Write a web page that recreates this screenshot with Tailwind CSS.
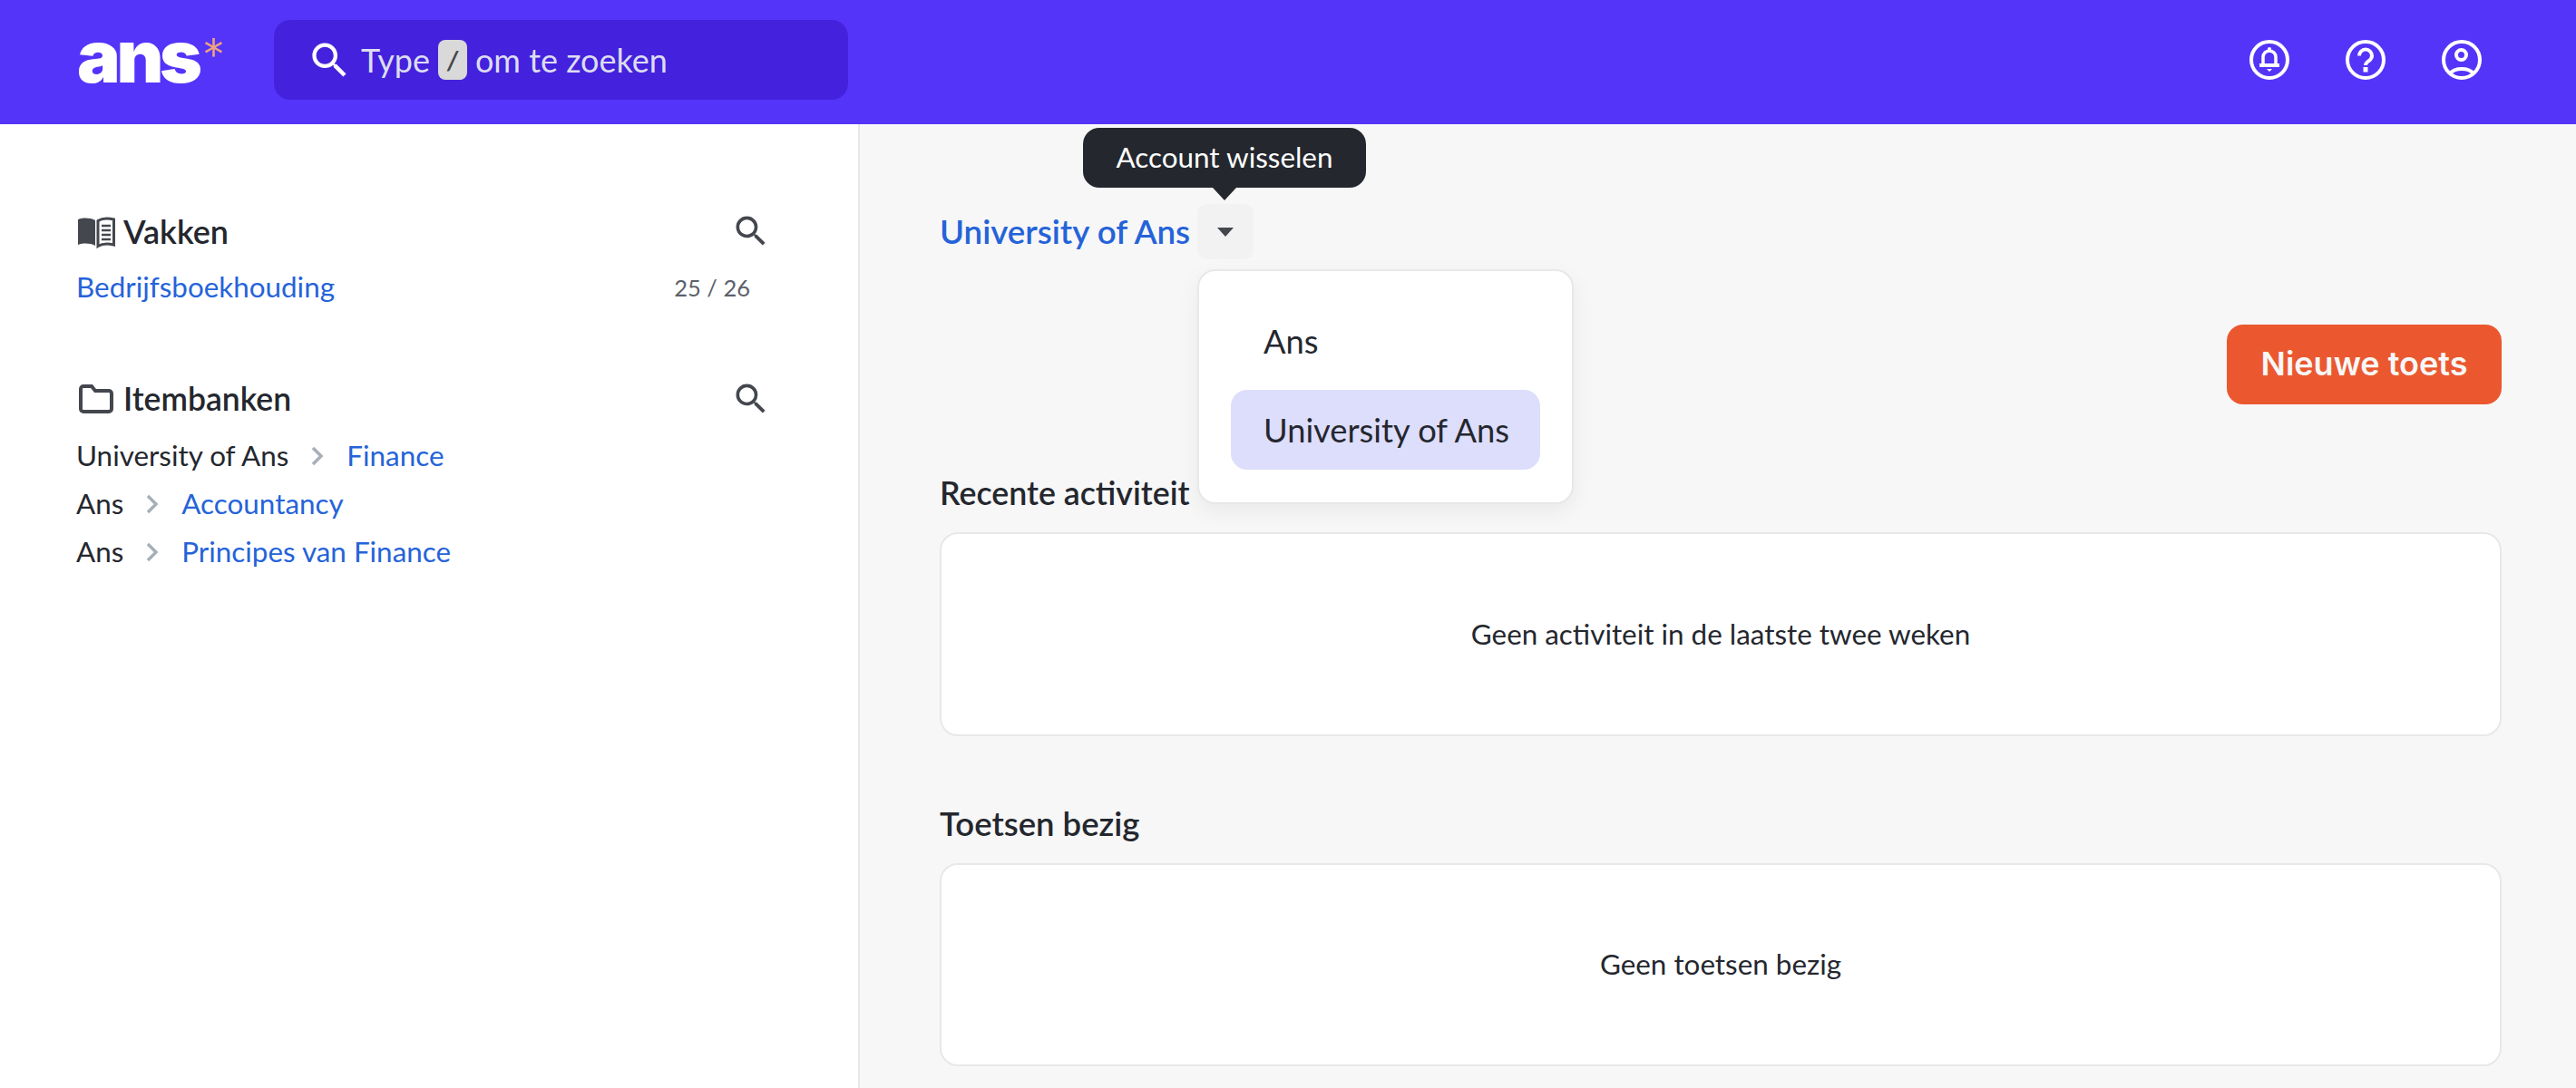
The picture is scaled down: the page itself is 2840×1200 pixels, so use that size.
<!DOCTYPE html>
<html lang="nl">
<head>
<meta charset="UTF-8">
<title>Ans</title>
<script src="https://cdn.jsdelivr.net/npm/@tailwindcss/browser@4"></script>
</head>
<body class="h-[1200px] overflow-hidden bg-white font-['Lato',sans-serif] text-[31.4px] text-[#24272e]">
  <!-- header -->
  <header class="flex h-[137px] items-start bg-[#5534fa] pl-[87px] pr-[104px] pt-[22px]">
    <a class="relative block h-[88px] w-[215px] shrink-0">
      <span class="absolute left-[-2px] top-[-4px] font-['Inter',sans-serif] text-[80px] leading-[88px] font-black tracking-[-4.3px] text-white">ans</span>
      <span class="absolute left-[136px] top-[11px] font-['Inter',sans-serif] text-[50px] leading-[56px] font-light text-[#efa37f]">*</span>
    </a>
    <div class="flex h-[88px] w-[633px] items-center rounded-[18px] bg-[#4422dd] pl-[36px] text-[36px] text-[#dcdcf2]">
      <svg class="h-[51px] w-[51px] shrink-0" viewBox="0 0 24 24" fill="#fff"><path d="M15.5 14h-.79l-.28-.27A6.471 6.471 0 0 0 16 9.5 6.5 6.5 0 1 0 9.5 16c1.61 0 3.09-.59 4.23-1.57l.27.28v.79l5 4.99L20.49 19l-4.99-5zm-6 0C7.01 14 5 11.99 5 9.5S7.01 5 9.5 5 14 7.01 14 9.5 11.99 14 9.5 14z"/></svg>
      <span class="ml-[9px]">Type</span>
      <span class="mx-[9px] flex h-[44px] w-[32px] items-center justify-center rounded-[8px] bg-[#d9d9d9] text-[28px] font-bold italic text-[#44474e]">/</span>
      <span>om te zoeken</span>
    </div>
    <div class="ml-auto flex h-[88px] items-center gap-[62px]">
      <svg class="h-[44px] w-[44px]" viewBox="0 0 44 44" fill="none" stroke="#fff" stroke-width="4"><circle cx="22" cy="22" r="20"/><path d="M15 27v-8a7 7 0 0 1 14 0v8" stroke-width="3.500"/><path d="M11 28h22" stroke-width="4"/><circle cx="22" cy="10" r="2" fill="#fff" stroke="none"/><path d="M19 32h6l-3 3z" fill="#fff" stroke="none"/></svg>
      <svg class="h-[44px] w-[44px]" viewBox="0 0 44 44" fill="none" stroke="#fff" stroke-width="4"><circle cx="22" cy="22" r="20"/><path d="M15 17.500a7 7 0 0 1 14 0c0 3.500-2 4.500-4 6s-3 2.500-3 4.500"/><path d="M19.500 30h5v5.500h-5z" fill="#fff" stroke="none"/></svg>
      <svg class="h-[44px] w-[44px]" viewBox="0 0 44 44" fill="none" stroke="#fff" stroke-width="4"><circle cx="22" cy="22" r="20"/><circle cx="21.500" cy="16.500" r="5.500"/><path d="M9 37c3-3.500 8-5 13-5s10 1.500 13 5"/></svg>
    </div>
  </header>

  <div class="flex h-[1063px]">
    <!-- sidebar -->
    <aside class="w-[948px] shrink-0 border-r-2 border-[#e8e8e8] pl-[84px] pr-[96px] pt-[99px]">
      <div class="flex h-[38px] items-center">
        <svg class="ml-[1px] h-[40px] w-[42px] shrink-0" viewBox="0 0 42 40"><path d="M1 7c6-2 13-2 19 1v28c-6-3-13-3-19-1z" fill="#44474e"/><path d="M23 8.500c5-3 11-3 17.500-1.500v28c-6-1.500-12.500-1.500-17.500 1.500z" fill="none" stroke="#44474e" stroke-width="3"/><path d="M27 14h10M27 19h10M27 24h10M27 29h10" stroke="#44474e" stroke-width="2.500"/></svg>
        <h2 class="ml-[9px] text-[36px] font-semibold">Vakken</h2>
        <svg class="ml-auto h-[44px] w-[44px]" viewBox="0 0 24 24" fill="#44474e"><path d="M15.500 14h-.79l-.28-.27A6.471 6.471 0 0 0 16 9.500 6.500 6.500 0 1 0 9.500 16c1.610 0 3.090-.59 4.230-1.570l.27.28v.79l5 4.990L20.490 19l-4.990-5zm-6 0C7.010 14 5 11.990 5 9.500S7.010 5 9.500 5 14 7.010 14 9.500 11.990 14 9.500 14z"/></svg>
      </div>
      <div class="mt-[24px] flex h-[38px] items-center justify-between pr-[23px]">
        <a class="text-[#2563d9]">Bedrijfsboekhouding</a>
        <span class="text-[25.5px] text-[#5b616b]">25 / 26</span>
      </div>
      <div class="mt-[85px] flex h-[38px] items-center">
        <svg class="ml-[3px] h-[32px] w-[38px] shrink-0" viewBox="0 0 38 32" fill="none" stroke="#44474e" stroke-width="4"><path d="M2 5a3 3 0 0 1 3-3h9l4 5h15a3 3 0 0 1 3 3v17a3 3 0 0 1-3 3H5a3 3 0 0 1-3-3z"/></svg>
        <h2 class="ml-[11px] text-[35.5px] font-semibold">Itembanken</h2>
        <svg class="ml-auto h-[44px] w-[44px]" viewBox="0 0 24 24" fill="#44474e"><path d="M15.500 14h-.79l-.28-.27A6.471 6.471 0 0 0 16 9.500 6.500 6.500 0 1 0 9.500 16c1.610 0 3.090-.59 4.230-1.570l.27.28v.79l5 4.990L20.490 19l-4.990-5zm-6 0C7.010 14 5 11.990 5 9.500S7.010 5 9.500 5 14 7.010 14 9.500 11.990 14 9.500 14z"/></svg>
      </div>
      <ul class="mt-[25px] flex flex-col gap-[15px]">
        <li class="flex h-[38px] items-center">University of Ans
          <svg class="ml-[25px] mr-[25px] h-[22px] w-[14px]" viewBox="0 0 14 22" fill="none" stroke="#a7afb8" stroke-width="3.500"><path d="M2 2l9 9-9 9"/></svg>
          <a class="text-[#2563d9]">Finance</a></li>
        <li class="flex h-[38px] items-center">Ans
          <svg class="ml-[25px] mr-[25px] h-[22px] w-[14px]" viewBox="0 0 14 22" fill="none" stroke="#a7afb8" stroke-width="3.500"><path d="M2 2l9 9-9 9"/></svg>
          <a class="text-[#2563d9]">Accountancy</a></li>
        <li class="flex h-[38px] items-center">Ans
          <svg class="ml-[25px] mr-[25px] h-[22px] w-[14px]" viewBox="0 0 14 22" fill="none" stroke="#a7afb8" stroke-width="3.500"><path d="M2 2l9 9-9 9"/></svg>
          <a class="text-[#2563d9]">Principes van Finance</a></li>
      </ul>
    </aside>

    <!-- main -->
    <main class="relative flex-1 bg-[#f7f7f7] pl-[88px] pr-[82px] pt-[88px]">
      <div class="flex h-[61px] items-center">
        <a class="text-[36.7px] font-semibold text-[#2563d9]">University of Ans</a>
        <button class="ml-[8px] flex h-[61px] w-[62px] items-center justify-center rounded-[10px] bg-[#f2f2f2]">
          <svg class="h-[10px] w-[20px]" viewBox="0 0 20 10" fill="#44474e"><path d="M1 0h18l-9 10z"/></svg>
        </button>
      </div>
      <div class="mt-[72px] flex justify-end">
        <button class="flex h-[88px] w-[303px] items-center justify-center rounded-[18px] bg-[#eb582f] pb-[3px] font-['Inter',sans-serif] text-[36px] font-semibold text-[#f7f7f7]">Nieuwe toets</button>
      </div>
      <h3 class="mt-[76px] h-[44px] text-[35.700px] leading-[44px] font-semibold">Recente activiteit</h3>
      <div class="mt-[21px] flex h-[225px] items-center justify-center rounded-[20px] border-2 border-[#e8e8e8] bg-white">Geen activiteit in de laatste twee weken</div>
      <h3 class="mt-[74px] h-[44px] text-[36.500px] leading-[44px] font-semibold">Toetsen bezig</h3>
      <div class="mt-[22px] flex h-[224px] items-center justify-center rounded-[20px] border-2 border-[#e8e8e8] bg-white">Geen toetsen bezig</div>

      <!-- tooltip -->
      <div class="absolute left-[246px] top-[4px] flex h-[66px] w-[312px] items-center justify-center rounded-[18px] bg-[#24272e] text-white">Account wisselen
        <span class="absolute left-[143px] top-[66px] h-0 w-0 border-x-[13px] border-t-[14px] border-x-transparent border-t-[#24272e]"></span>
      </div>
      <!-- account menu -->
      <div class="absolute left-[372px] top-[160px] w-[415px] rounded-[20px] border-2 border-[#e8e8e8] bg-white px-[35px] pt-[42px] pb-[36px] text-[36.300px] whitespace-nowrap shadow-[0_8px_24px_rgba(0,0,0,0.06)]">
        <div class="flex h-[70px] items-center px-[36px]">Ans</div>
        <div class="mt-[19px] flex h-[88px] items-center rounded-[18px] bg-[#ddddfc] px-[36px]">University of Ans</div>
      </div>
    </main>
  </div>
</body>
</html>
